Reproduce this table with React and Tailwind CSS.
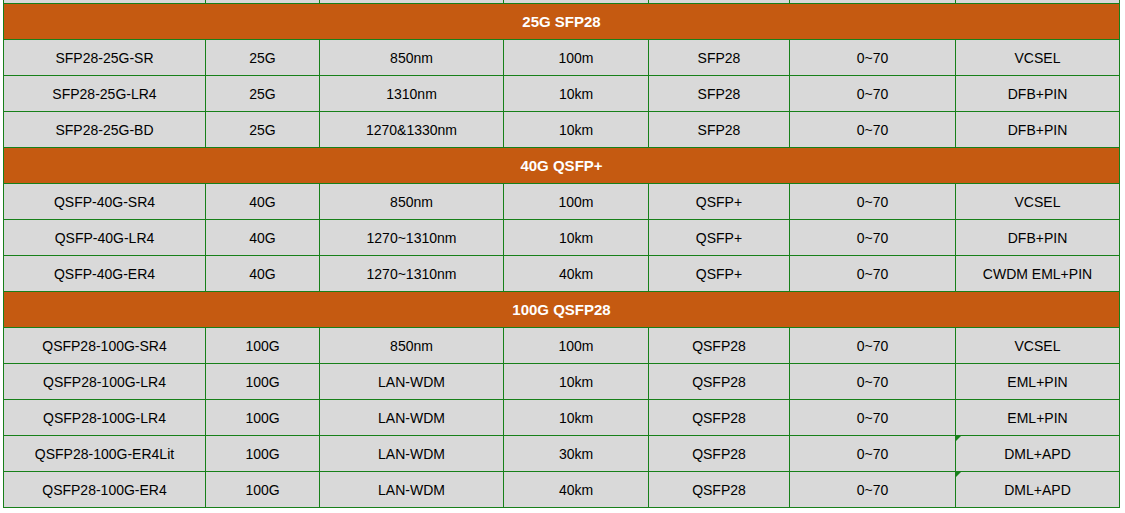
import React from 'react';

// column widths incl. right border, matching the sheet grid
const cols = ['w-[202px]', 'w-[114px]', 'w-[184px]', 'w-[145px]', 'w-[141px]', 'w-[166px]', 'w-[164px]'];

const sections = [
  {
    title: '25G SFP28',
    rows: [
      ['SFP28-25G-SR', '25G', '850nm', '100m', 'SFP28', '0~70', 'VCSEL'],
      ['SFP28-25G-LR4', '25G', '1310nm', '10km', 'SFP28', '0~70', 'DFB+PIN'],
      ['SFP28-25G-BD', '25G', '1270&1330nm', '10km', 'SFP28', '0~70', 'DFB+PIN'],
    ],
  },
  {
    title: '40G QSFP+',
    rows: [
      ['QSFP-40G-SR4', '40G', '850nm', '100m', 'QSFP+', '0~70', 'VCSEL'],
      ['QSFP-40G-LR4', '40G', '1270~1310nm', '10km', 'QSFP+', '0~70', 'DFB+PIN'],
      ['QSFP-40G-ER4', '40G', '1270~1310nm', '40km', 'QSFP+', '0~70', 'CWDM EML+PIN'],
    ],
  },
  {
    title: '100G QSFP28',
    rows: [
      ['QSFP28-100G-SR4', '100G', '850nm', '100m', 'QSFP28', '0~70', 'VCSEL'],
      ['QSFP28-100G-LR4', '100G', 'LAN-WDM', '10km', 'QSFP28', '0~70', 'EML+PIN'],
      ['QSFP28-100G-LR4', '100G', 'LAN-WDM', '10km', 'QSFP28', '0~70', 'EML+PIN'],
      ['QSFP28-100G-ER4Lit', '100G', 'LAN-WDM', '30km', 'QSFP28', '0~70', 'DML+APD', true],
      ['QSFP28-100G-ER4', '100G', 'LAN-WDM', '40km', 'QSFP28', '0~70', 'DML+APD', true],
    ],
  },
];

function DataRow({ cells, flag }) {
  return (
    <div className="flex h-[36px]">
      {cols.map((w, i) => (
        <div
          key={i}
          className={`${w} relative flex items-center justify-center border-r border-b border-[#17801a] bg-[#d9d9d9] pt-[2px] text-[14px] text-black`}
        >
          {flag && i === 6 && (
            <span className="absolute left-0 top-0 h-0 w-0 border-t-[5px] border-r-[5px] border-t-[#17801a] border-r-transparent" />
          )}
          {cells[i]}
        </div>
      ))}
    </div>
  );
}

export default function App() {
  return (
    <div className="h-[513px] w-[1125px] bg-white" style={{ fontFamily: '"Liberation Sans", Arial, sans-serif' }}>
      <div className="ml-[3px] w-[1117px] border-l border-[#17801a]">
        {/* tail of the row scrolled out above */}
        <div className="flex h-[4px]">
          {cols.map((w, i) => (
            <div key={i} className={`${w} border-r border-b border-[#17801a] bg-[#d9d9d9]`} />
          ))}
        </div>

        {sections.map((s) => (
          <div key={s.title}>
            <div className="flex h-[36px] items-center justify-center border-r border-b border-[#17801a] bg-[#c55a11] pt-[2px] text-[15px] font-bold text-white">
              {s.title}
            </div>
            {s.rows.map((r, i) => (
              <DataRow key={i} cells={r} flag={r[7]} />
            ))}
          </div>
        ))}
      </div>
    </div>
  );
}
